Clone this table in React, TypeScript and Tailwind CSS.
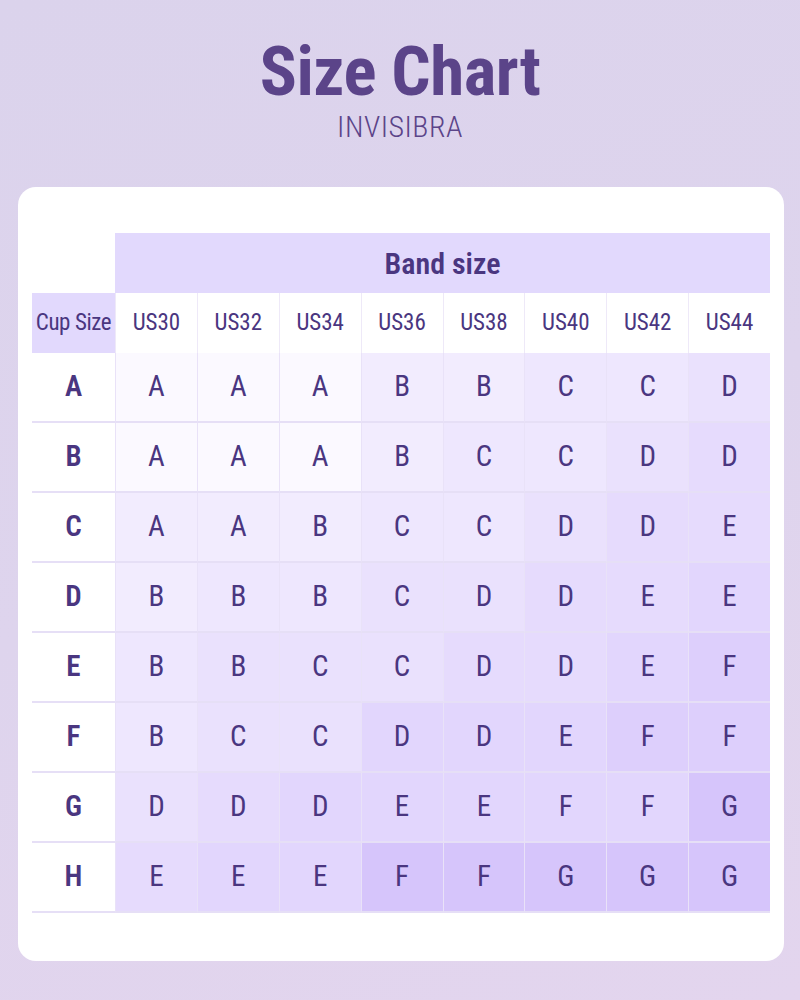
const bands = ["US30", "US32", "US34", "US36", "US38", "US40", "US42", "US44"];

// cup size -> recommended size per band, with a shade index for each cell
const rows: { cup: string; sizes: string; shades: number[] }[] = [
  { cup: "A", sizes: "AAABBCCD", shades: [0, 0, 0, 2, 2, 3, 3, 4] },
  { cup: "B", sizes: "AAABCCDD", shades: [0, 0, 0, 2, 3, 3, 4, 5] },
  { cup: "C", sizes: "AABCCDDE", shades: [2, 2, 2, 3, 3, 4, 5, 5] },
  { cup: "D", sizes: "BBBCDDEE", shades: [2, 3, 3, 4, 4, 5, 5, 6] },
  { cup: "E", sizes: "BBCCDDEF", shades: [3, 4, 4, 4, 5, 5, 6, 7] },
  { cup: "F", sizes: "BCCDDEFF", shades: [3, 4, 4, 6, 6, 6, 7, 7] },
  { cup: "G", sizes: "DDDEEFFG", shades: [4, 5, 6, 6, 6, 6, 6, 9] },
  { cup: "H", sizes: "EEEFFGGG", shades: [5, 6, 6, 9, 9, 9, 9, 9] },
];

const shadeClass = [
  "bg-[#fbf9ff]",
  "bg-[#f6f2fe]",
  "bg-[#f2ecfe]",
  "bg-[#eee7fe]",
  "bg-[#eae1fd]",
  "bg-[#e6dbfd]",
  "bg-[#e2d6fd]",
  "bg-[#ddcffc]",
  "bg-[#d9cafc]",
  "bg-[#d6c5fb]",
];

const font = "font-['Roboto_Condensed','Liberation_Sans_Narrow','DejaVu_Sans_Condensed',Roboto,sans-serif] font-stretch-condensed";

export default function App() {
  return (
    <div className={`min-h-[1000px] w-full bg-[linear-gradient(160deg,#dbd3ec_0%,#ded4ed_50%,#e3d5ee_100%)] ${font}`}>
      <header className="flex flex-col items-center pt-[35px]">
        <h1 className="text-[69px] font-bold leading-[74px] tracking-[-0.5px] text-[#5b4489]">
          Size Chart
        </h1>
        <p className="mt-0 text-[30px] font-light leading-[36px] tracking-[0.5px] text-[#5b4489]">
          INVISIBRA
        </p>
      </header>

      <section className="mt-[42px] mr-[16px] ml-[18px] rounded-[18px] bg-white px-[14px] pt-[46px] pb-[48px]">
        <div className="grid grid-cols-[83px_repeat(8,minmax(0,1fr))] text-[#4a3680]">
          <div className="h-[60px]" />
          <div className="col-span-8 flex h-[60px] items-center justify-center bg-[#e2d9fd] text-[30px] font-semibold">
            Band size
          </div>

          <div className="flex h-[60px] items-center justify-center bg-[#e2d9fd] text-[23px] font-normal tracking-[-0.4px]">
            Cup Size
          </div>
          {bands.map((band) => (
            <div
              key={band}
              className="flex h-[60px] items-center justify-center border-l border-[#eee9f8] text-[23px] font-normal"
            >
              {band}
            </div>
          ))}

          {rows.map((row) => (
            <div key={row.cup} className="contents">
              <div className="flex h-[70px] items-center justify-center border-b-2 border-[#e6dff6] bg-white text-[29px] font-semibold">
                {row.cup}
              </div>
              {row.sizes.split("").map((size, i) => (
                <div
                  key={i}
                  className={`flex h-[70px] items-center justify-center border-b-2 border-l border-b-[#e6dff6] border-l-[#e9e2f8] text-[29px] font-normal ${shadeClass[row.shades[i]]}`}
                >
                  {size}
                </div>
              ))}
            </div>
          ))}
        </div>
      </section>
    </div>
  );
}
